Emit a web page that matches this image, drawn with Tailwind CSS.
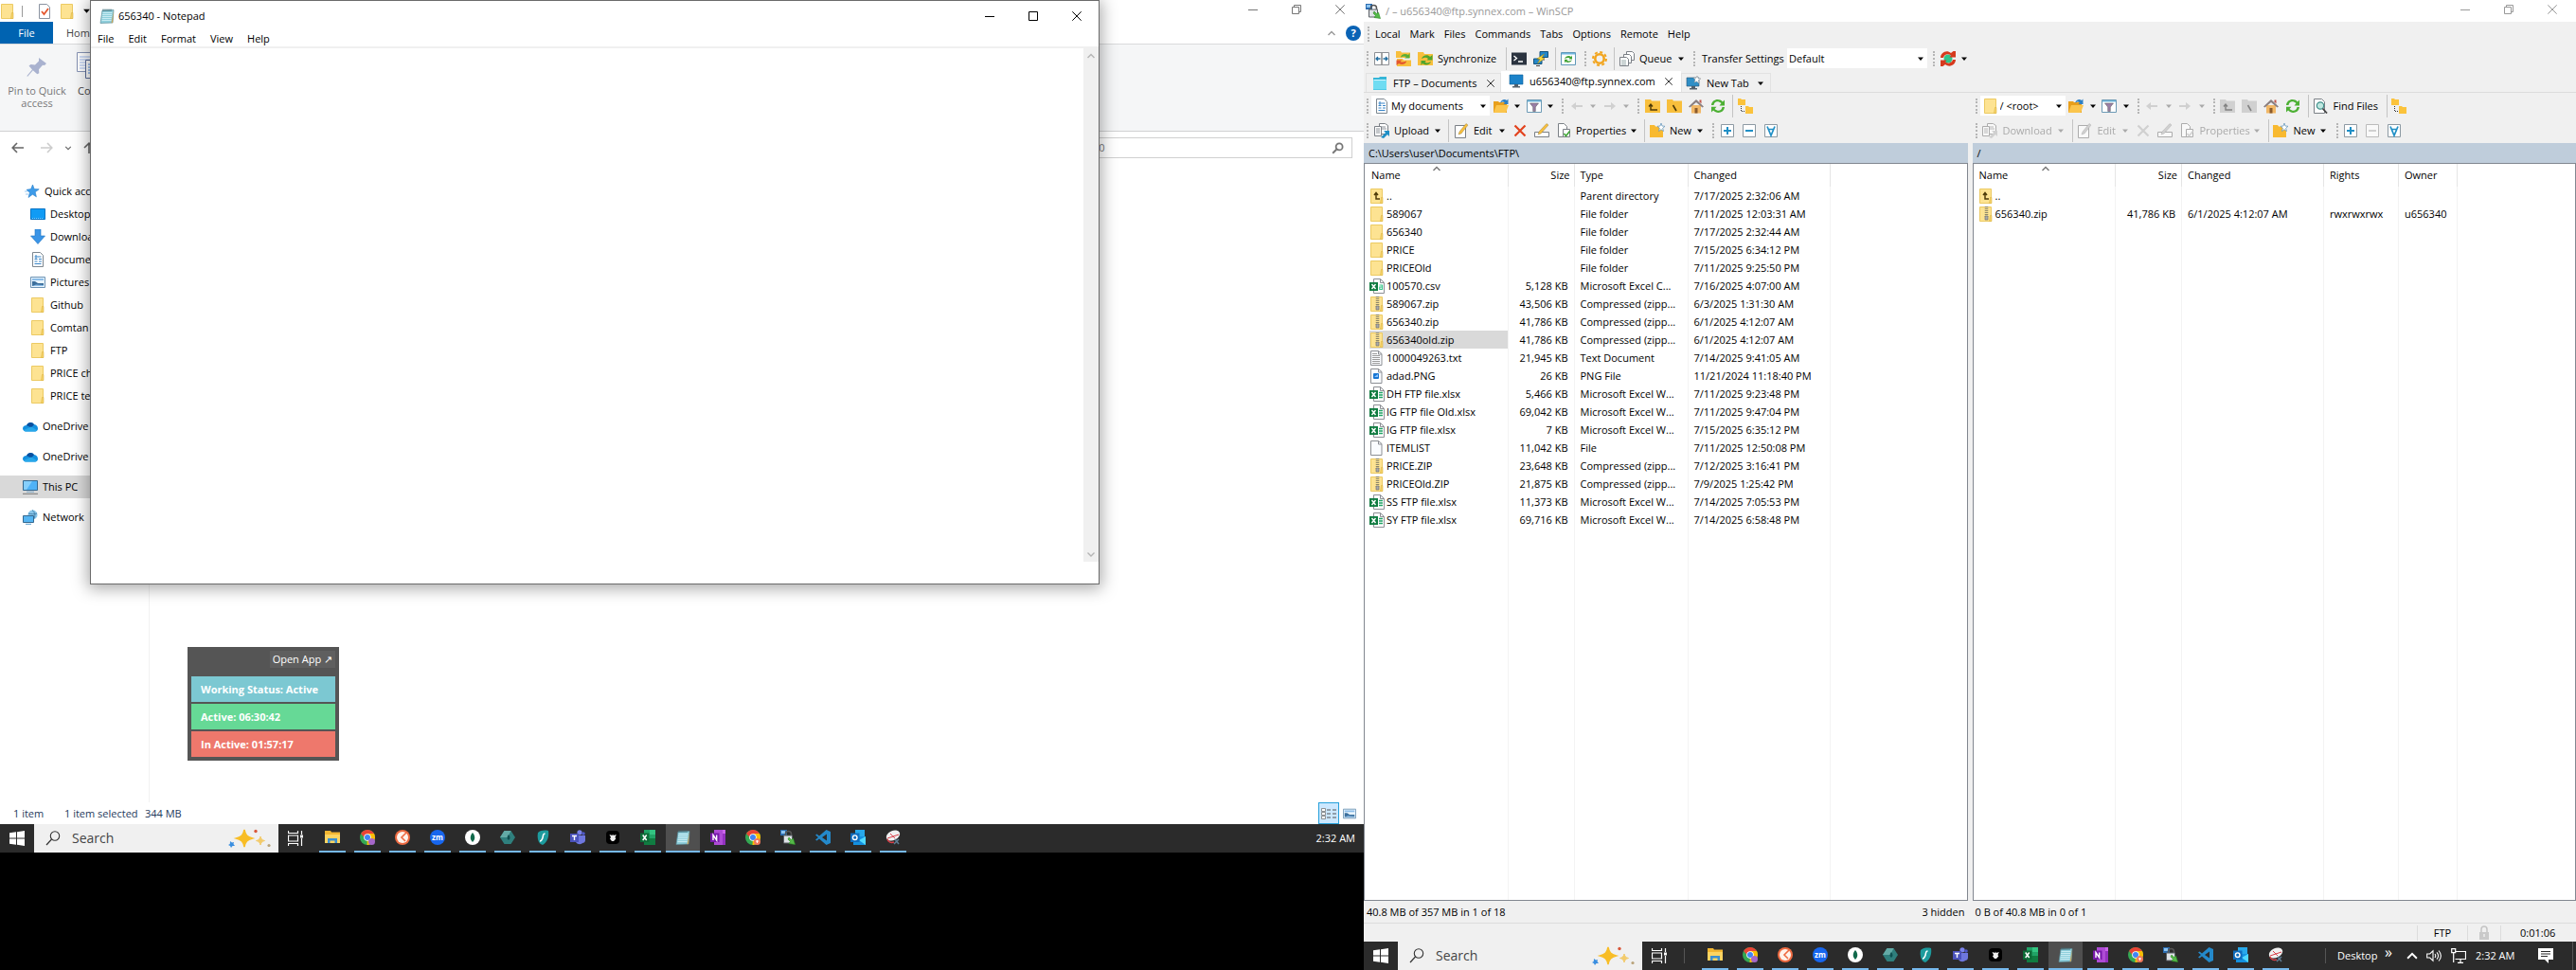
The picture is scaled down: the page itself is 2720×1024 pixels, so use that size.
<!DOCTYPE html>
<html lang="en">
<head>
    <meta charset="UTF-8">
    <meta name="viewport" content="width=device-width, initial-scale=1.0">
    <title>Desktop</title>
    <script src="https://cdn.jsdelivr.net/npm/@tailwindcss/browser@4"></script>
</head>
<body class="bg-black text-black text-[11px] leading-4 font-['Open_Sans','Noto_Sans',sans-serif]">

    <!-- Icon sprite -->
    <svg class="hidden" xmlns="http://www.w3.org/2000/svg">
        <symbol id="i-folder" viewBox="0 0 16 16"><path d="M1.500.5h12v15h-12z" fill="#fde392" stroke="#ecca62"/><path d="M11.500 15.500l1-6 1.500 0v6z" fill="#f7d56a" stroke="#dcb444" stroke-width=".6"/></symbol>
        <symbol id="i-folderup" viewBox="0 0 16 16"><use href="#i-folder"/><path d="M7 5v6h4M5 7l2-2.500 2 2.500" fill="none" stroke="#4d3a08" stroke-width="1.500"/></symbol>
        <symbol id="i-zip" viewBox="0 0 16 16"><use href="#i-folder"/><path d="M8.500 0v11" stroke="#8a8468" stroke-width="3.500" stroke-dasharray="1 1"/><path d="M7 10h3v4H7z" fill="#aaa" stroke="#666" stroke-width=".6"/></symbol>
        <symbol id="i-file" viewBox="0 0 16 16"><path d="M1.500.5h8l3.500 3v12h-11.500z" fill="#fafcff" stroke="#8c8f94"/><path d="M9.500.5v3.500h3.500" fill="none" stroke="#8c8f94"/></symbol>
        <symbol id="i-txt" viewBox="0 0 16 16"><use href="#i-file"/><path d="M3 3.500h5M3 5.500h8M3 7.500h8M3 9.500h8M3 11.500h8M3 13.500h8" stroke="#9b9b9b"/></symbol>
        <symbol id="i-png" viewBox="0 0 16 16"><use href="#i-file"/><rect x="4" y="5" width="6" height="6" rx="1" fill="#1976d2"/><path d="M5 9l4-3v3z" fill="#8cc5ff"/></symbol>
        <symbol id="i-xlsx" viewBox="0 0 16 16"><path d="M4.500.5h7l4 4v11h-11z" fill="#fff" stroke="#8c8f94"/><path d="M11.500.5v4h4" fill="none" stroke="#8c8f94"/><path d="M10 6.500h4M10 9h4M10 11.500h4" stroke="#21a366" stroke-width="1.400"/><path d="M0 4h9v9H0z" fill="#107c41"/><path d="M2.500 6l4 5M6.500 6l-4 5" stroke="#fff" stroke-width="1.400"/></symbol>
        <symbol id="i-csv" viewBox="0 0 16 16"><path d="M4.500.5h7l4 4v11h-11z" fill="#fff" stroke="#8c8f94"/><path d="M11.500.5v4h4" fill="none" stroke="#8c8f94"/><path d="M10.500 7H13.500v4.500H10.800V9h2.700" fill="none" stroke="#3bc58a" stroke-width="1.200"/><path d="M0 4h9v9H0z" fill="#107c41"/><path d="M2.500 6l4 5M6.500 6l-4 5" stroke="#fff" stroke-width="1.400"/></symbol>
        <symbol id="i-doc" viewBox="0 0 16 16"><path d="M2.500.5h8l3 3v12h-11z" fill="#fff" stroke="#7d8790"/><path d="M4.500 5h7M4.500 7.500h3M9 7.500h3M4.500 10h3M9 10h3M4.500 12.500h7" stroke="#3a86c8" stroke-width="1.200"/><path d="M6 3v4" stroke="#3a86c8"/></symbol>
        <symbol id="i-desktop" viewBox="0 0 16 16"><path d="M.5 2.500h15v11H.5z" fill="#109bf5" stroke="#0b74c4"/><path d="M2 12.500h12" stroke="#7cc9fb" stroke-dasharray="1 1"/></symbol>
        <symbol id="i-download" viewBox="0 0 16 16"><path d="M5 0h6v7h4.500L8 15.500.5 7H5z" fill="#3a94e6" stroke="#1d74c4" stroke-width=".6"/></symbol>
        <symbol id="i-pictures" viewBox="0 0 16 16"><path d="M.5 2.500h15v11H.5z" fill="#e8f4fd" stroke="#6d93b4"/><path d="M2 4h12v2H2z" fill="#8cbde8"/><path d="M2 12V7h3l3 2h6v3z" fill="#3c6f9c"/><path d="M2 12l4-1.500 8 .5v1z" fill="#8fc0ea"/></symbol>
        <symbol id="i-star" viewBox="0 0 16 16"><path d="M8.500 1l1.700 4.500 5 .3-4 3 1.200 5-4-2.600L4 14.500l1.400-5L2 6.300l4.600-.7z" fill="#3d9be9" stroke="#2a7fc9" stroke-width=".6"/><path d="M0 8h3M1 11h3" stroke="#9ccbf3"/></symbol>
        <symbol id="i-onedrive" viewBox="0 0 16 16"><path d="M4 7a4.500 4.500 0 018-1c2.500.5 4 2 4 4.500 0 2-1.500 3-3 3H3.500C1.500 13.500 0 12 0 10.500 0 8.500 1.500 7 4 7z" fill="#1490df"/><path d="M4 7a4.500 4.500 0 018-1L9 9.500z" fill="#0a4f9e"/><path d="M1 12l8-3.500 6 3.500c-.5 1-1.300 1.500-2 1.500H3.500C2.300 13.500 1.500 13 1 12z" fill="#28a8ea"/></symbol>
        <symbol id="i-pc" viewBox="0 0 16 16"><path d="M.5 1.500h15v10H.5z" fill="#4fb2f7" stroke="#35688f"/><path d="M1 2h9L4 11H1z" fill="#86cffc"/><path d="M4 13.200h8" stroke="#7aa5c4"/><path d="M0 15.300h16" stroke="#777"/></symbol>
        <symbol id="i-network" viewBox="0 0 16 16"><circle cx="10.500" cy="5.500" r="5" fill="#8ac6ea"/><path d="M10 .5c3 2 4 7 1 10M6 4c3 1 6 1 9 0" stroke="#4584ad" fill="none"/><path d="M.5 6.500h11v7H.5z" fill="#55b5f2" stroke="#35688f"/><path d="M3 15.300h6" stroke="#5c9fcd"/></symbol>
        <symbol id="i-notepad" viewBox="0 0 16 16"><path d="M3 2l12-.5-1 13.500-13 .5z" fill="#8fcfdc" stroke="#5d8f9b" stroke-width=".7"/><path d="M3.500 4.500h10M3 6.500h10M3 8.500h10M2.700 10.500h10M2.500 12.500h10" stroke="#d6f2f7" stroke-width=".8"/><path d="M4 .5v2.500M6 .5v2.500M8 .5v2.500M10 .5v2.500M12 .5v2.500" stroke="#44707a" stroke-width=".9"/><path d="M15 2l-1 13-1.500.3z" fill="#c8a45a"/></symbol>
        <symbol id="i-check" viewBox="0 0 16 16"><path d="M2.500.5h8l3 3v12h-11z" fill="#fff" stroke="#8a93a0"/><path d="M5 8l2.500 3L12 5" fill="none" stroke="#e4572e" stroke-width="1.800"/></symbol>
        <symbol id="i-pin" viewBox="0 0 24 24"><path d="M14 2l8 6-2 2-2-.3-4 4.500.3 4-2 1-4.500-4L2 22l-.5-1L7 14.500 3.500 10.500 5.500 9l4.500.6L14 5.500z" fill="#a9b2cf"/></symbol>
        <symbol id="i-copy" viewBox="0 0 28 32"><path d="M.5.5h17v20H.5z" fill="#fff" stroke="#8794b5"/><path d="M3 5h12M3 8h12M3 11h12M3 14h12M3 17h12" stroke="#9db8ec"/><path d="M9.500 8.500h17v19h-17z" fill="#fff" stroke="#5b6c99"/><path d="M12 13h12M12 16h12M12 19h12M12 22h12" stroke="#4d8ae0"/></symbol>
        <symbol id="i-winscp" viewBox="0 0 16 16"><path d="M0 0h7v6H0z" fill="#2b6cb0"/><path d="M1 1h4v3H1z" fill="#8cc3f0"/><path d="M5.500 6V4.500a3 3 0 016 0V6" fill="none" stroke="#555" stroke-width="1.500"/><path d="M3.500 6h9v8h-9z" fill="#dfe2e6" stroke="#5b6066"/><path d="M9 8l2.500 2.500L13.500 9l2 6.500-6.500-1 1.500-2L8 10z" fill="#54b948" stroke="#2d8a25" stroke-width=".6"/></symbol>
        <symbol id="i-compare" viewBox="0 0 16 16"><path d="M.5 1.500h15v13H.5z" fill="#fff" stroke="#8c8f94"/><path d="M8 2v12" stroke="#4a4a4a"/><path d="M2 8h4.500M9.500 8H14M4 6L2 8l2 2M12 6l2 2-2 2" fill="none" stroke="#1f6c9e" stroke-width="1.300"/></symbol>
        <symbol id="i-syncred" viewBox="0 0 16 16"><path d="M0 0h5l1 1.500h9V7H0zM1 8h6l1 1.500h8V16H1z" fill="#f8bf3c"/><path d="M5 6c1-3 5-4 8-2l1.500-2v5.500H9l2-1.500c-2-1-4-.5-6 .5z" fill="#5aae37"/><path d="M11 11c-1 3-5 4-8 2l-2.500 2V9.500h6l-2 1.500c2 1 4 .5 6.500-.5z" fill="#e4572e"/></symbol>
        <symbol id="i-sync" viewBox="0 0 16 16"><path d="M0 1h6l1 2h9v12H0z" fill="#f8bf3c"/><path d="M4 8c1-4 7-5 9-2l2.500-2v5.500H9.500L11 8c-2-2-4-1-7 0zM14 11c-1 3.500-6 4.500-9 2l-1.500 2v-5H9l-1.500 1.500c2 1.500 4 1 6.500-.5z" fill="#4fa52e"/></symbol>
        <symbol id="i-terminal" viewBox="0 0 16 16"><path d="M0 1.500h16v13H0z" fill="#2b3440"/><path d="M2.500 5l3 2.500-3 2.500M7 11h5" fill="none" stroke="#fff" stroke-width="1.300"/></symbol>
        <symbol id="i-putty" viewBox="0 0 16 16"><path d="M7 .5h8.500v6H7zM.5 8H9v5.500H.5z" fill="#2487c9" stroke="#15537d"/><path d="M11 7.500V10M3 15.500h4" stroke="#444"/><path d="M11.500 3L4 8l3 .6L4.500 13 12 7.500 9 7z" fill="#ffd93b" stroke="#a08411" stroke-width=".5"/></symbol>
        <symbol id="i-refreshbox" viewBox="0 0 16 16"><path d="M.5 1.500h15v13H.5z" fill="#fff" stroke="#5f98b8"/><path d="M1 2h14v1.500H1z" fill="#72b7df"/><path d="M4 8c1-3 5-4 7-2l1-1.500V8.500H8.500l1-1.200C8 6.500 6 7 4 8zM12 9c-1 3-5 4-7 2l-1 1.500V8.800h3.500L6.500 10c2 .8 3.500.5 5.500-1z" fill="#43a336"/></symbol>
        <symbol id="i-gear" viewBox="0 0 16 16"><circle cx="8" cy="8" r="4.700" fill="none" stroke="#f2a51f" stroke-width="2.600"/><circle cx="8" cy="8" r="7" fill="none" stroke="#f2a51f" stroke-width="2" stroke-dasharray="3 2.500"/></symbol>
        <symbol id="i-queue" viewBox="0 0 16 16"><g fill="#fff" stroke="#7b8086"><path d="M7.500.5h6l2 2v7h-8z"/><path d="M4.500 3.500h6l2 2v7h-8z"/><path d="M.5 6.500h7l2 2v7h-9z"/></g><path d="M2 10h5M2 12h5M2 14h5" stroke="#9aa"/></symbol>
        <symbol id="i-caret" viewBox="0 0 8 8"><path d="M1 2.500h6L4 6z" fill="currentColor"/></symbol>
        <symbol id="i-session" viewBox="0 0 16 16"><path d="M1 2h6l1-1h7v14H1z" fill="#35b6d8"/><path d="M1 5h14v9.500H1z" fill="#6fdcf2"/><path d="M1.500 4.500h13" stroke="#d2f7ff"/></symbol>
        <symbol id="i-monitor" viewBox="0 0 16 16"><path d="M1 1h14v10H1z" fill="#1b82c9" stroke="#0d5e99" stroke-width=".6"/><path d="M6 11h4v2H6zM4 13h8v1.500H4z" fill="#53606b"/></symbol>
        <symbol id="i-newtab" viewBox="0 0 16 16"><path d="M1 2h13v9H1z" fill="#2f8fc6" stroke="#2a5575" stroke-width=".6"/><path d="M6 11h4v2H6zM4 13h8v1.500H4z" fill="#53606b"/><path d="M12 0l1 2.500L16 3l-2.500 1.500L14 8l-2.500-2L9 7l1-3-2-2 3 .3z" fill="#fff" stroke="#888" stroke-width=".5"/></symbol>
        <symbol id="i-open" viewBox="0 0 16 16"><path d="M0 3h5l1 1h8v11H0z" fill="#e89f1c"/><path d="M3 7h13l-3 8H0z" fill="#fbc54d"/><path d="M7 5c1-4 5-5 7-3l1.500-1.500V6h-5L12 4.500C10.500 3 8.500 3.500 7 5z" fill="#2e80c4"/></symbol>
        <symbol id="i-filter" viewBox="0 0 16 16"><path d="M.5 1.500h15v13H.5z" fill="#fff" stroke="#6c9ab5"/><path d="M1 2h14v1.500H1z" fill="#6db3d8"/><path d="M3.500 5h9L9.300 9v4.500H6.700V9z" fill="#9a7fa6" stroke="#555" stroke-width=".5"/></symbol>
        <symbol id="i-back" viewBox="0 0 16 16"><path d="M14 7H7V4L2 8l5 4V9h7z" fill="currentColor"/></symbol>
        <symbol id="i-fwd" viewBox="0 0 16 16"><path d="M2 7h7V4l5 4-5 4V9H2z" fill="currentColor"/></symbol>
        <symbol id="i-parent" viewBox="0 0 16 16"><path d="M0 1h6l1 1.500h9V15H0z" fill="currentColor"/><path d="M6 6v6h7M4 8.500L6 6l2 2.500" fill="none" stroke="#4d3a08" stroke-width="1.400"/></symbol>
        <symbol id="i-root" viewBox="0 0 16 16"><path d="M0 1h6l1 1.500h9V15H0z" fill="currentColor"/><path d="M6.500 7l3.500 6" stroke="#4d3a08" stroke-width="1.600"/></symbol>
        <symbol id="i-home" viewBox="0 0 16 16"><path d="M3 7h10v8.500H3z" fill="#f2b867"/><path d="M6.500 10h3v5.500h-3z" fill="#8a5a2d"/><path d="M0 8.500L8 1l8 7.500-1.500 1L8 4 1.500 9.500z" fill="#8a7f80"/><path d="M11.500 1.500h2v4l-2-2z" fill="#c0554a"/></symbol>
        <symbol id="i-refresh" viewBox="0 0 16 16"><path d="M1 7c.5-6 8-8 12-3.500L15 1.500V7.500H9.500L11.500 5C8 2 4 3 3.500 7zM15 9c-.5 6-8 8-12 3.500L1 14.500V8.800h5.500L4.500 11C8 14 12 13 12.500 9z" fill="#4cb033"/></symbol>
        <symbol id="i-tree" viewBox="0 0 16 16"><path d="M0 0h3l1 1h4v6H0zM8 8h3l1 1h4v7H8z" fill="#fbc33c"/><path d="M3.500 8v5.500H8" fill="none" stroke="#333" stroke-dasharray="1 1"/></symbol>
        <symbol id="i-transfer" viewBox="0 0 16 16"><g fill="#fff" stroke="#7b8086"><path d="M5.500.5h6l3 2v9h-9z"/><path d="M.5 3.500h7v10h-7z"/></g><path d="M2 6h4M2 8h4M2 10h4M8 4h4M8 6h5" stroke="#8a9097"/><path d="M7 15l5-5-2-2h6v6l-2-2-4 4z" fill="currentColor"/></symbol>
        <symbol id="i-edit" viewBox="0 0 16 16"><path d="M1.500 2.500h11v13h-11z" fill="#fff" stroke="#7b8086"/><path d="M5 12l1-3 7-8.500 2 1.500-7 9z" fill="currentColor" stroke="#8a7440" stroke-width=".4"/></symbol>
        <symbol id="i-delete" viewBox="0 0 16 16"><path d="M2.500 2.500l11 11M13.500 2.500l-11 11" stroke="currentColor" stroke-width="2.200"/></symbol>
        <symbol id="i-rename" viewBox="0 0 16 16"><path d="M.5 9.500h15v5H.5z" fill="#fff" stroke="#7b8086"/><path d="M4 12l1-3 8-8.500 2 1.500-8 9z" fill="currentColor" stroke="#8a7440" stroke-width=".4"/></symbol>
        <symbol id="i-props" viewBox="0 0 16 16"><path d="M2.500.5h6l3 3v11h-9z" fill="#fff" stroke="#7b8086"/><path d="M7.500 6.500h7v8h-7z" fill="#fff" stroke="#7b8086"/><path d="M8.500 11l2 2.500 4-5" fill="none" stroke="currentColor" stroke-width="1.600"/></symbol>
        <symbol id="i-new" viewBox="0 0 16 16"><path d="M0 2h5l1 1.500h8V15H0z" fill="#f8b930"/><path d="M12 0l1 3 3 .3-2.300 2 .8 3.200L12 6.700 9.500 8.500l.8-3.200L8 3.300 11 3z" fill="#fff" stroke="#5a8fb8" stroke-width=".7"/></symbol>
        <symbol id="i-plus" viewBox="0 0 16 16"><path d="M1.500 1.500h13v13h-13z" fill="#fff" stroke="#8d9aa3"/><path d="M4 8h8M8 4v8" stroke="currentColor" stroke-width="2"/></symbol>
        <symbol id="i-minus" viewBox="0 0 16 16"><path d="M1.500 1.500h13v13h-13z" fill="#fff" stroke="#8d9aa3"/><path d="M4 8h8" stroke="currentColor" stroke-width="2"/></symbol>
        <symbol id="i-select" viewBox="0 0 16 16"><path d="M1.500 1.500h13v13h-13z" fill="#fff" stroke="#8d9aa3"/><path d="M4 3.500L8 13l4-9.500M5.500 6.500h5" fill="none" stroke="currentColor" stroke-width="1.700"/></symbol>
        <symbol id="i-find" viewBox="0 0 16 16"><path d="M1.500.5h8l3 3v12h-11z" fill="#fff" stroke="#7b8086"/><circle cx="8" cy="7.500" r="3.700" fill="#bfe8e0" stroke="#3f8f8a" stroke-width="1.200"/><path d="M10.500 10.500l4.500 5" stroke="#444" stroke-width="1.800"/></symbol>
        <symbol id="i-reconnect" viewBox="0 0 16 16"><circle cx="8" cy="8" r="4.500" fill="#2fc58c"/><path d="M0 7c0-5 6-9 11-5L13.500 0H16v6.500H9.500l1.500-2C7 2 4 4 3 7zM16 9c0 5-6 9-11 5l-2.500 2H0V9.500h6.500l-1.500 2c4 2.500 7 .5 8-2.500z" fill="#d63a1e"/></symbol>
        <symbol id="i-mag" viewBox="0 0 16 16"><circle cx="10" cy="5.500" r="4.700" fill="none" stroke="currentColor" stroke-width="1.100"/><path d="M6.500 9L1 15" stroke="currentColor" stroke-width="1.200"/></symbol>
        <symbol id="i-magbold" viewBox="0 0 16 16"><circle cx="10" cy="6" r="4.300" fill="none" stroke="currentColor" stroke-width="2.200"/><path d="M7 9L1.500 14.500" stroke="currentColor" stroke-width="2.400"/></symbol>
        <symbol id="i-min" viewBox="0 0 10 10"><path d="M0 5.500h10" stroke="currentColor"/></symbol>
        <symbol id="i-max" viewBox="0 0 10 10"><path d="M.5.5h9v9h-9z" fill="none" stroke="currentColor"/></symbol>
        <symbol id="i-restore" viewBox="0 0 10 10"><path d="M.5 2.500h7v7h-7zM2.500 2.500v-2h7v7h-2" fill="none" stroke="currentColor"/></symbol>
        <symbol id="i-close" viewBox="0 0 10 10"><path d="M.3.3l9.400 9.400M9.700.3L.3 9.700" stroke="currentColor"/></symbol>
        <symbol id="i-up" viewBox="0 0 10 10"><path d="M1.500 7L5 3.500 8.500 7" fill="none" stroke="currentColor" stroke-width="1.400"/></symbol>
        <symbol id="i-down" viewBox="0 0 10 10"><path d="M1.500 3.500L5 7l3.500-3.500" fill="none" stroke="currentColor" stroke-width="1.400"/></symbol>
        <symbol id="i-arrow-l" viewBox="0 0 14 12"><path d="M13 6H1.500M6 1L1.200 6 6 11" fill="none" stroke="currentColor" stroke-width="1.600"/></symbol>
        <symbol id="i-arrow-r" viewBox="0 0 14 12"><path d="M1 6h11.500M8 1l4.800 5L8 11" fill="none" stroke="currentColor" stroke-width="1.600"/></symbol>
        <symbol id="i-arrow-u" viewBox="0 0 12 12"><path d="M6 12V1.500M1 6l5-4.800L11 6" fill="none" stroke="currentColor" stroke-width="1.600"/></symbol>
        <!-- Taskbar -->
        <symbol id="t-start" viewBox="0 0 16 16"><path d="M0 2.300L7 1.300v6.200H0zM8 1.200L16 0v7.500H8zM0 8.500h7v6.200l-7-1zM8 8.500h8V16l-8-1.200z" fill="#fff"/></symbol>
        <symbol id="t-sparkle" viewBox="0 0 46 20"><path d="M18 1c1 5.500 3 7.500 8.500 9-5.500 1.500-7.500 3.500-8.500 9-1-5.500-3-7.500-8.500-9C15 8.500 17 6.500 18 1z" fill="#f8bd26" stroke="#f8bd26" stroke-width="1.500"/><path d="M35 8c.6 2.800 1.700 3.800 4.500 4.500-2.800.7-3.900 1.700-4.500 4.500-.6-2.800-1.700-3.800-4.500-4.500C33.300 11.800 34.400 10.800 35 8z" fill="#f3cb6a" stroke="#f3cb6a"/><path d="M3 13l2 1.500 2-.5-.5 2L8 18l-2.500 0L4 20l-1-2-2-1 1.800-1z" fill="#3a8ee0"/><circle cx="30" cy="2.500" r="1.700" fill="#d9583b"/><circle cx="44" cy="17.500" r="1.600" fill="#b9a37a"/></symbol>
        <symbol id="t-view" viewBox="0 0 16 16"><path d="M.5 0v2.500h10V0M.5 16v-2.500h10V16M.5 5h10v6H.5zM14.500 0v4M14.500 8v8" fill="none" stroke="#fff" stroke-width="1.200"/><path d="M13 4.500h3v3h-3z" fill="#fff"/></symbol>
        <symbol id="t-explorer" viewBox="0 0 16 16"><path d="M0 1h6l1 1.500h9V14H0z" fill="#f2b632"/><path d="M0 5h16v9H0z" fill="#fcd462"/><path d="M3 14V9h10v5h-2.500v-2.500h-5V14z" fill="#3b8fd0"/></symbol>
        <symbol id="t-chrome" viewBox="0 0 16 16"><circle cx="8" cy="8" r="8" fill="#34a853"/><path d="M8 8h8A8 8 0 017.500 16z" fill="#fbbc05"/><path d="M8 4h7a8 8 0 01.9 5L10 9z" fill="#fbbc05"/><path d="M1.100 4A8 8 0 0115 4H8L5 8.500z" fill="#ea4335"/><circle cx="8" cy="8" r="3.800" fill="#fff"/><circle cx="8" cy="8" r="3" fill="#4285f4"/></symbol>
        <symbol id="t-chrome1" viewBox="0 0 16 16"><use href="#t-chrome"/><circle cx="12.500" cy="12.500" r="3.500" fill="#a566c9"/></symbol>
        <symbol id="t-chrome2" viewBox="0 0 16 16"><use href="#t-chrome"/><circle cx="12.500" cy="12.500" r="3.500" fill="#f2795c"/><path d="M11 12h3M12.500 11v3" stroke="#fff"/></symbol>
        <symbol id="t-orange" viewBox="0 0 16 16"><circle cx="8" cy="8" r="8" fill="#ee6b42"/><circle cx="8" cy="8" r="6" fill="#fff3ec"/><path d="M12 3L7 8l4 4" fill="none" stroke="#ee6b42" stroke-width="1.600"/></symbol>
        <symbol id="t-zoom" viewBox="0 0 16 16"><circle cx="8" cy="8" r="8" fill="#1766ee"/><text x="8" y="10.500" text-anchor="middle" font-size="8" font-weight="700" fill="#fff">zm</text></symbol>
        <symbol id="t-mongo" viewBox="0 0 16 16"><circle cx="8" cy="8" r="8" fill="#fff"/><path d="M8 3c3 3.500 3 7 0 10-3-3-3-6.500 0-10z" fill="#11694b"/></symbol>
        <symbol id="t-hex" viewBox="0 0 16 16"><path d="M4.500 1h7L16 8l-4.500 7h-7L0 8z" fill="#2f7f7d"/><path d="M4.500 1h7L8 8H0z" fill="#63aaa6"/><path d="M9 5c2 2.500 2 4.500 0 6-2-1.500-2-3.500 0-6z" fill="#0f4f50"/></symbol>
        <symbol id="t-surf" viewBox="0 0 16 16"><path d="M3 3c3-2.500 7-3 11-2 1 6-1 12-6 15C3 15 2 8 3 3z" fill="#1d9b9d"/><path d="M10.500 4C8 4 8.500 7 8 8.500S7 12 5 12" fill="none" stroke="#fff" stroke-width="1.500"/></symbol>
        <symbol id="t-teams" viewBox="0 0 16 16"><circle cx="10" cy="2.800" r="2.600" fill="#7b83eb"/><circle cx="14" cy="4" r="1.800" fill="#5059c9"/><path d="M6 6h10v5c0 2-1.500 3-3 3-1 1.500-5 2-7-1z" fill="#6e77de"/><path d="M0 4h9v9H0z" fill="#4b53bc"/><path d="M2 6.500h5M4.500 6.500V11" stroke="#fff" stroke-width="1.400"/></symbol>
        <symbol id="t-black" viewBox="0 0 16 16"><rect x="1" y="1" width="14" height="14" rx="4" fill="#000"/><path d="M4.500 5l3 1L8 4.500l.8 1.500 3-1-1.300 3 .8 1.500-2.300 2.500H7L5 9.500 6 8z" fill="#eee"/></symbol>
        <symbol id="t-excel" viewBox="0 0 16 16"><path d="M4 0h12v16H4z" fill="#21a366"/><path d="M10 0h6v5h-6z" fill="#33c481"/><path d="M4 9h12v7H4z" fill="#107c41"/><path d="M0 3.500h9.500v9.500H0z" fill="#0d6b37"/><path d="M2.700 5.500l4 5.500M6.700 5.500l-4 5.500" stroke="#fff" stroke-width="1.500"/></symbol>
        <symbol id="t-onenote" viewBox="0 0 16 16"><path d="M4 0h12v16H4z" fill="#ca64ea"/><path d="M13 4h3v12h-3z" fill="#9332bf"/><path d="M4 0h9v16H4z" fill="#ae4bd5"/><path d="M0 3.500h9.500v9.500H0z" fill="#7719aa"/><path d="M3 11V5.500L6.700 11V5.500" fill="none" stroke="#fff" stroke-width="1.400"/></symbol>
        <symbol id="t-vscode" viewBox="0 0 16 16"><path d="M11.500 0L16 2v12l-4.500 2L4 9.500 1.500 11.500 0 10.500 3 8 0 5.500l1.500-1L4 6.500zM12 4.500L7 8l5 3.500z" fill="#2489ca"/></symbol>
        <symbol id="t-outlook" viewBox="0 0 16 16"><path d="M5 0h10v8H5z" fill="#28a8ea"/><path d="M3 7h13v9H3z" fill="#1490df"/><path d="M9 11l7-4v9z" fill="#50d9ff"/><path d="M0 3.500h9.500v9.500H0z" fill="#0f6cbd"/><circle cx="4.700" cy="8.200" r="2.300" fill="none" stroke="#fff" stroke-width="1.400"/></symbol>
        <symbol id="t-snip" viewBox="0 0 16 16"><ellipse cx="8" cy="6" rx="7.500" ry="5" transform="rotate(-25 8 6)" fill="#f1f1f1"/><path d="M2 9l12-4M5 4l5 5" stroke="#d9404a"/><path d="M2 10c1 3 4 4 7 3" stroke="#d9404a" fill="none" stroke-width="1.600"/><path d="M10 10l4 5M14 10l-5 5" stroke="#5f7d94" stroke-width="1.500"/></symbol>
        <symbol id="t-sound" viewBox="0 0 16 16"><path d="M.7 6h3L7 2.800v10.400L3.700 10h-3zM9 6c1 1.300 1 2.700 0 4M11 4.300c2 2.300 2 5 0 7.400M13 2.500c3 3.500 3 7.500 0 11" fill="none" stroke="#fff" stroke-width="1.100"/></symbol>
        <symbol id="t-net" viewBox="0 0 16 16"><path d="M4.500 3.500h11v8h-11M10 12v3M7 15.300h6" fill="none" stroke="#fff" stroke-width="1.200"/><path d="M.7.7h4v4h-4zM2.700 5v10" fill="none" stroke="#fff" stroke-width="1.200"/></symbol>
        <symbol id="t-action" viewBox="0 0 16 16"><path d="M0 0h16v12h-5v4l-4-4H0z" fill="#fff"/><path d="M3 3.500h10M3 6h10M3 8.500h7" stroke="#2b2b2b" stroke-width="1.200"/></symbol>
    </svg>

    <div class="grid grid-cols-[9fr_8fr] min-h-screen">

        <!-- Left monitor -->
        <section class="relative flex flex-col pb-[124px] min-w-0">
            <div class="flex flex-col flex-1 bg-white">
                <header class="flex h-[23px] justify-between text-[#777]">
                    <div class="flex items-center">
                        <svg class="size-4"><use href="#i-folder"/></svg>
                        <span class="w-px h-3 bg-[#999] mx-[7px]"></span>
                        <svg class="size-4 mx-2"><use href="#i-check"/></svg>
                        <svg class="size-4"><use href="#i-folder"/></svg>
                        <svg class="size-[9px] mx-2 text-black"><use href="#i-caret"/></svg>
                    </div>
                    <div class="flex items-center pb-[3px] pr-[2px]">
                        <button aria-label="Minimize" class="w-[46px] grid place-items-center"><svg class="size-[10px]"><use href="#i-min"/></svg></button>
                        <button aria-label="Restore" class="w-[46px] grid place-items-center"><svg class="size-[10px]"><use href="#i-restore"/></svg></button>
                        <button aria-label="Close" class="w-[46px] grid place-items-center"><svg class="size-[10px]"><use href="#i-close"/></svg></button>
                    </div>
                </header>
                <div class="flex h-6 items-stretch border-b border-[#d9dadb]">
                    <button class="w-14 bg-[#0063b1] text-white">File</button>
                    <button class="px-[14px] text-[#444]">Home</button>
                    <div class="ml-auto flex items-center gap-[10px] pr-[3px]">
                        <svg class="size-[10px] text-[#999]"><use href="#i-up"/></svg>
                        <button aria-label="Help" class="size-4 rounded-full bg-[#0a63b5] text-white font-bold leading-4">?</button>
                    </div>
                </div>
                <div class="flex h-[92px] bg-[#f5f6f7] border-b border-[#d0d1d2] pt-2 text-[#777]">
                    <button class="w-[78px] flex flex-col items-center justify-start leading-[13px]"><svg class="size-6 mt-1 mb-[6px]"><use href="#i-pin"/></svg>Pin to Quick<br>access</button>
                    <button class="w-[34px] flex flex-col items-center justify-start leading-[13px] text-[#444]"><svg class="w-7 h-8 mb-[2px]"><use href="#i-copy"/></svg>Copy</button>
                </div>
                <div class="flex h-[34px] items-center justify-between">
                    <div class="flex items-center pl-3 text-[#666]">
                        <svg class="w-[14px] h-3"><use href="#i-arrow-l"/></svg>
                        <svg class="w-[14px] h-3 ml-4 text-[#ccc]"><use href="#i-arrow-r"/></svg>
                        <svg class="size-2 ml-3"><use href="#i-down"/></svg>
                        <svg class="size-3 ml-3"><use href="#i-arrow-u"/></svg>
                    </div>
                    <label class="flex items-center w-[342px] h-[22px] mr-3 border border-[#d0d0d0] px-1 text-[#777]">
                        <input type="text" value="Search 656340" aria-label="Search 656340" class="flex-1 outline-none">
                        <svg class="size-[13px] mr-1"><use href="#i-magbold"/></svg>
                    </label>
                </div>
                <nav class="flex-1 w-[158px] border-r border-[#f2f2f2] pt-[17px]">
                    <ul id="nav"></ul>
                </nav>
                <footer class="flex h-[23px] items-center text-[#1e395b]">
                    <span class="ml-[14px] w-[54px]">1 item</span>
                    <span class="w-[85px]">1 item selected</span>
                    <span>344 MB</span>
                    <div class="ml-auto flex h-full items-center gap-1 pr-2">
                        <button aria-label="Details view" class="w-[22px] h-full bg-[#cce8ff] border border-[#26a0da] grid place-items-center"><svg class="w-4 h-3" viewBox="0 0 16 12"><path d="M.5.5h4v3h-4zM.5 4.500h4v3h-4zM.5 8.500h4v3h-4z" fill="#fff" stroke="#777" stroke-width=".8"/><path d="M6 2h4M12 2h4M6 6h4M12 6h4M6 10h4M12 10h4" stroke="#555"/></svg></button>
                        <button aria-label="Large icons"><svg class="size-[14px]"><use href="#i-pictures"/></svg></button>
                    </div>
                </footer>
            </div>
            <div class="flex h-[30px] bg-[#2b2b2b] text-white items-center">
                <div class="taskbar flex h-full"></div>
                <time class="ml-auto mr-[9px]">2:32 AM</time>
            </div>

            <!-- Notepad window -->
            <div class="absolute top-0 left-[95px] right-[279px] h-[617px] flex flex-col bg-white border border-[#6b6b6b] shadow-[0_2px_16px_2px_rgba(0,0,0,0.35)]">
                <header class="flex h-[31px] items-center pl-[9px]">
                    <svg class="size-4"><use href="#i-notepad"/></svg>
                    <h1 class="ml-1">656340 - Notepad</h1>
                    <div class="ml-auto flex">
                        <button aria-label="Minimize" class="w-[46px] grid place-items-center"><svg class="size-[10px]"><use href="#i-min"/></svg></button>
                        <button aria-label="Maximize" class="w-[46px] grid place-items-center"><svg class="size-[10px]"><use href="#i-max"/></svg></button>
                        <button aria-label="Close" class="w-[46px] grid place-items-center"><svg class="size-[10px]"><use href="#i-close"/></svg></button>
                    </div>
                </header>
                <nav class="flex h-[19px] items-center gap-[15px] pl-[7px] border-b-2 border-[#f0f0f0]">
                    <button>File</button>
                    <button>Edit</button>
                    <button>Format</button>
                    <button>View</button>
                    <button>Help</button>
                </nav>
                <div class="flex flex-1 mb-[23px]">
                    <textarea aria-label="Document text" class="flex-1 resize-none outline-none"></textarea>
                    <div class="w-4 bg-[#f0f0f0] flex flex-col items-center justify-between py-[3px] text-[#b5b5b5]">
                        <svg class="size-[10px]"><use href="#i-up"/></svg>
                        <svg class="size-[10px]"><use href="#i-down"/></svg>
                    </div>
                </div>
            </div>

            <!-- Time tracker widget -->
            <div class="absolute left-[198px] top-[683px] w-40 h-[120px] bg-[#555] p-1 text-white flex flex-col gap-[2px] font-bold">
                <button class="self-end h-[18px] mb-[7px] px-[3px] bg-[#5f5f5f] font-normal">Open App ↗</button>
                <div class="h-[27px] pl-[10px] flex items-center bg-[#7cc8d2]">Working Status: Active</div>
                <div class="h-[27px] pl-[10px] flex items-center bg-[#66d996]">Active: 06:30:42</div>
                <div class="h-[27px] pl-[10px] flex items-center bg-[#ee786c]">In Active: 01:57:17</div>
            </div>
        </section>

        <!-- Right monitor: WinSCP -->
        <section class="flex flex-col min-w-0 bg-[#f0f0f0]">
            <header class="flex h-[23px] items-center bg-white pl-[2px] text-[#999]">
                <svg class="size-4"><use href="#i-winscp"/></svg>
                <h1 class="ml-[5px]">/ – u656340@ftp.synnex.com – WinSCP</h1>
                <div class="ml-auto flex items-center pb-[3px] pr-[2px]">
                    <button aria-label="Minimize" class="w-[46px] grid place-items-center"><svg class="size-[10px]"><use href="#i-min"/></svg></button>
                    <button aria-label="Restore" class="w-[46px] grid place-items-center"><svg class="size-[10px]"><use href="#i-restore"/></svg></button>
                    <button aria-label="Close" class="w-[46px] grid place-items-center"><svg class="size-[10px]"><use href="#i-close"/></svg></button>
                </div>
            </header>
            <nav class="flex h-[25px] items-center">
                <span class="ml-1 h-4 border-l-2 border-dotted border-[#b5b5b5]"></span>
                <div class="flex gap-[10px] ml-[6px]">
                    <button>Local</button>
                    <button>Mark</button>
                    <button>Files</button>
                    <button>Commands</button>
                    <button>Tabs</button>
                    <button>Options</button>
                    <button>Remote</button>
                    <button>Help</button>
                </div>
            </nav>
            <div id="toolbar-main" class="flex h-[27px] items-center"></div>
            <div class="flex h-[23px] items-stretch border-b border-[#dcdcdc] pl-[2px]">
                <button class="flex items-center w-[143px] pl-[6px] mt-[2px] border border-b-0 border-[#e2e2e2]"><svg class="size-4 mr-[6px]"><use href="#i-session"/></svg>FTP – Documents<svg class="size-2 ml-auto mr-[6px]"><use href="#i-close"/></svg></button>
                <button class="flex items-center w-[190px] pl-2 bg-white"><svg class="size-4 mr-[6px]"><use href="#i-monitor"/></svg>u656340@ftp.synnex.com<svg class="size-2 ml-auto mr-[9px]"><use href="#i-close"/></svg></button>
                <button class="flex items-center w-[95px] pl-1 mt-[2px] border border-b-0 border-[#e2e2e2]"><svg class="size-4 mr-[6px]"><use href="#i-newtab"/></svg>New Tab<svg class="size-2 ml-auto mr-[6px]"><use href="#i-caret"/></svg></button>
            </div>
            <div class="flex-1 grid grid-cols-2 gap-[5px]">
                <div class="flex flex-col min-w-0">
                    <div id="local-nav" class="flex h-[27px] items-center"></div>
                    <div id="local-actions" class="flex h-[26px] items-center"></div>
                    <div class="h-[21px] leading-[21px] bg-[#bfcddb] pl-[5px]">C:\Users\user\Documents\FTP\</div>
                    <div class="flex-1 bg-white border border-[#828790]">
                        <table class="w-full h-full table-fixed">
                            <colgroup><col class="w-[151px]"><col class="w-[70px]"><col class="w-[120px]"><col class="w-[150px]"><col></colgroup>
                            <thead>
                                <tr class="h-6 text-left">
                                    <th class="relative font-normal pl-[7px] border-r border-[#e5e5e5]">Name<svg class="absolute size-[10px] left-[71px] top-0 text-[#777]"><use href="#i-up"/></svg></th>
                                    <th class="font-normal pr-1 text-right border-r border-[#e5e5e5]">Size</th>
                                    <th class="font-normal pl-[6px] border-r border-[#e5e5e5]">Type</th>
                                    <th class="font-normal pl-[6px] border-r border-[#e5e5e5]">Changed</th>
                                    <th></th>
                                </tr>
                            </thead>
                            <tbody id="local-files"></tbody>
                        </table>
                    </div>
                    <div class="h-[23px] leading-[23px] flex justify-between px-[3px]"><span>40.8 MB of 357 MB in 1 of 18</span><span>3 hidden</span></div>
                </div>
                <div class="flex flex-col min-w-0">
                    <div id="remote-nav" class="flex h-[27px] items-center"></div>
                    <div id="remote-actions" class="flex h-[26px] items-center"></div>
                    <div class="h-[21px] leading-[21px] bg-[#bfcddb] pl-[5px]">/</div>
                    <div class="flex-1 bg-white border border-[#828790]">
                        <table class="w-full h-full table-fixed">
                            <colgroup><col class="w-[150px]"><col class="w-[70px]"><col class="w-[150px]"><col class="w-[79px]"><col class="w-[62px]"><col></colgroup>
                            <thead>
                                <tr class="h-6 text-left">
                                    <th class="relative font-normal pl-[6px] border-r border-[#e5e5e5]">Name<svg class="absolute size-[10px] left-[71px] top-0 text-[#777]"><use href="#i-up"/></svg></th>
                                    <th class="font-normal pr-1 text-right border-r border-[#e5e5e5]">Size</th>
                                    <th class="font-normal pl-[6px] border-r border-[#e5e5e5]">Changed</th>
                                    <th class="font-normal pl-[6px] border-r border-[#e5e5e5]">Rights</th>
                                    <th class="font-normal pl-[6px] border-r border-[#e5e5e5]">Owner</th>
                                    <th></th>
                                </tr>
                            </thead>
                            <tbody id="remote-files"></tbody>
                        </table>
                    </div>
                    <div class="h-[23px] leading-[23px] px-[3px]">0 B of 40.8 MB in 0 of 1</div>
                </div>
            </div>
            <footer class="flex h-5 justify-end items-center border-t border-[#dcdcdc]">
                <span class="w-[53px] border-l border-[#dcdcdc] text-center">FTP</span>
                <span class="w-[35px] border-l border-[#dcdcdc] grid place-items-center"><svg class="w-3 h-4" viewBox="0 0 12 16"><path d="M3 7V4a3 3 0 016 0v3" fill="none" stroke="#c4c4c4" stroke-width="1.500"/><path d="M1 7h10v8H1z" fill="#c9c9c9"/><path d="M6 9v3" stroke="#eee" stroke-width="1.500"/></svg></span>
                <span class="w-20 border-l border-[#dcdcdc] pl-5">0:01:06</span>
            </footer>
            <div class="flex h-[30px] bg-[#2b2b2b] text-white items-center">
                <div class="taskbar flex h-full" data-grip="1"></div>
                <div class="ml-auto flex items-center pr-[3px]">
                    <span class="w-px h-4 bg-[#555] mr-3"></span>
                    <span class="w-[50px]">Desktop</span>
                    <span class="w-[14px] text-base leading-4 pb-2">»</span>
                    <svg class="size-[14px] mx-2"><use href="#i-up"/></svg>
                    <svg class="size-4"><use href="#t-sound"/></svg>
                    <svg class="size-4 mx-[10px]"><use href="#t-net"/></svg>
                    <time class="w-[66px]">2:32 AM</time>
                    <svg class="size-4 mr-5"><use href="#t-action"/></svg>
                    <span class="w-px h-[30px] bg-[#555]"></span>
                </div>
            </div>
        </section>
    </div>

    <script>
        const icon = (id, cls = 'size-4') => `<svg class="${cls} shrink-0"><use href="#${id}"/></svg>`;

        // --- Explorer navigation pane ---
        const navItems = [
            ['i-star', 'Quick access', 'pl-[26px]'],
            ['i-desktop', 'Desktop', 'pl-8'],
            ['i-download', 'Downloads', 'pl-8'],
            ['i-doc', 'Documents', 'pl-8'],
            ['i-pictures', 'Pictures', 'pl-8'],
            ['i-folder', 'Github', 'pl-8'],
            ['i-folder', 'Comtan', 'pl-8'],
            ['i-folder', 'FTP', 'pl-8'],
            ['i-folder', 'PRICE ch', 'pl-8'],
            ['i-folder', 'PRICE te', 'pl-8'],
            ['i-onedrive', 'OneDrive', 'pl-6 mt-2'],
            ['i-onedrive', 'OneDrive', 'pl-6 mt-2'],
            ['i-pc', 'This PC', 'pl-6 mt-2 bg-[#d9d9d9]'],
            ['i-network', 'Network', 'pl-6 mt-2'],
        ];
        document.getElementById('nav').innerHTML = navItems.map(([id, text, cls]) =>
            `<li class="${cls}"><a href="#" class="flex h-6 items-center gap-[5px] whitespace-nowrap">${icon(id)}${text}</a></li>`).join('');

        // --- Toolbars ---
        const grip = () => `<span class="ml-[6px] first:ml-[3px] w-[3px] mr-px h-4 border-l-2 border-dotted border-[#b5b5b5] shrink-0"></span>`;
        const sep = () => `<span class="ml-1 w-px mr-px h-6 bg-[#c4c4c4] shrink-0"></span>`;
        function button(id, { label = '', width = '', caret = false, color = '', off = false } = {}) {
            const tone = off ? 'text-[#aaa] grayscale' : '';
            const glyph = off ? 'size-4 text-[#bbb] opacity-60' : `size-4 ${color}`;
            return `<button class="flex items-center shrink-0 h-6 ${tone}" ${off ? 'disabled' : ''} aria-label="${label || id.slice(2)}">
                <span class="w-[23px] grid place-items-center">${icon(id, glyph)}</span>
                ${label ? `<span class="${width} pl-[2px] text-left whitespace-nowrap">${label}</span>` : ''}
                ${caret ? `<span class="${label ? 'w-[15px]' : 'w-3'} grid place-items-center">${icon('i-caret', 'size-2')}</span>` : ''}
            </button>`;
        }
        const select = (id, text, width) => `<label class="flex items-center h-[21px] bg-white shrink-0 ml-px pr-[3px] ${width}">
            ${id ? icon(id, 'size-4 ml-[3px]') : ''}
            <select aria-label="${text}" class="flex-1 min-w-0 appearance-none outline-none pl-[2px]"><option>${text}</option></select>${icon('i-caret', 'size-2')}</label>`;

        const gold = 'text-[#f8bf3c]', blue = 'text-[#1f8fc6]', green = 'text-[#3fa535]', red = 'text-[#e2431e]';

        document.getElementById('toolbar-main').innerHTML = [
            grip(), button('i-compare'), button('i-syncred'), button('i-sync', { label: 'Synchronize', width: 'w-[70px]' }),
            sep(), button('i-terminal'), button('i-putty'), sep(), button('i-refreshbox'),
            grip(), button('i-gear'), sep(), button('i-queue', { label: 'Queue', width: 'w-[38px]', caret: true }),
            grip(), '<span class="w-[94px] pl-[5px] whitespace-nowrap">Transfer Settings</span>', select('', 'Default', 'w-[148px]'),
            grip(), button('i-reconnect', { caret: true }),
        ].join('');

        const navTools = (remote) => [
            button('i-open', { caret: true }), button('i-filter', { caret: true }),
            grip(), button('i-back', { caret: true, off: true }), button('i-fwd', { caret: true, off: true }),
            grip(), button('i-parent', { color: gold, off: remote }), button('i-root', { color: gold, off: remote }),
            button('i-home'), button('i-refresh'), sep(),
        ].join('');
        document.getElementById('local-nav').innerHTML =
            grip() + select('i-doc', 'My documents', 'w-[125px]') + navTools(false) + button('i-tree');
        document.getElementById('remote-nav').innerHTML =
            grip() + select('i-folder', '/ &lt;root&gt;', 'w-[90px]') + navTools(true) +
            button('i-find', { label: 'Find Files', width: 'w-[54px]' }) + sep() + button('i-tree');

        const actionTools = (first, width, off) => [
            grip(), button('i-transfer', { label: first, width, caret: true, color: blue, off }),
            sep(), button('i-edit', { label: 'Edit', width: 'w-[24px]', caret: true, color: gold, off }),
            button('i-delete', { color: red, off }), button('i-rename', { color: gold, off }),
            button('i-props', { label: 'Properties', width: 'w-[55px]', caret: true, color: green, off }),
            sep(), button('i-new', { label: 'New', width: 'w-[26px]', caret: true }),
            grip(), button('i-plus', { color: blue }), button('i-minus', { color: blue, off }), button('i-select', { color: blue }),
        ].join('');
        document.getElementById('local-actions').innerHTML = actionTools('Upload', 'w-[40px]', false);
        document.getElementById('remote-actions').innerHTML = actionTools('Download', 'w-[56px]', true);

        // --- File lists ---
        const localFiles = [
            ['i-folderup', '..', '', 'Parent directory', '7/17/2025 2:32:06 AM'],
            ['i-folder', '589067', '', 'File folder', '7/11/2025 12:03:31 AM'],
            ['i-folder', '656340', '', 'File folder', '7/17/2025 2:32:44 AM'],
            ['i-folder', 'PRICE', '', 'File folder', '7/15/2025 6:34:12 PM'],
            ['i-folder', 'PRICEOld', '', 'File folder', '7/11/2025 9:25:50 PM'],
            ['i-csv', '100570.csv', '5,128 KB', 'Microsoft Excel C...', '7/16/2025 4:07:00 AM'],
            ['i-zip', '589067.zip', '43,506 KB', 'Compressed (zipp...', '6/3/2025 1:31:30 AM'],
            ['i-zip', '656340.zip', '41,786 KB', 'Compressed (zipp...', '6/1/2025 4:12:07 AM'],
            ['i-zip', '656340old.zip', '41,786 KB', 'Compressed (zipp...', '6/1/2025 4:12:07 AM'],
            ['i-txt', '1000049263.txt', '21,945 KB', 'Text Document', '7/14/2025 9:41:05 AM'],
            ['i-png', 'adad.PNG', '26 KB', 'PNG File', '11/21/2024 11:18:40 PM'],
            ['i-xlsx', 'DH FTP file.xlsx', '5,466 KB', 'Microsoft Excel W...', '7/11/2025 9:23:48 PM'],
            ['i-xlsx', 'IG FTP file Old.xlsx', '69,042 KB', 'Microsoft Excel W...', '7/11/2025 9:47:04 PM'],
            ['i-xlsx', 'IG FTP file.xlsx', '7 KB', 'Microsoft Excel W...', '7/15/2025 6:35:12 PM'],
            ['i-file', 'ITEMLIST', '11,042 KB', 'File', '7/11/2025 12:50:08 PM'],
            ['i-zip', 'PRICE.ZIP', '23,648 KB', 'Compressed (zipp...', '7/12/2025 3:16:41 PM'],
            ['i-zip', 'PRICEOld.ZIP', '21,875 KB', 'Compressed (zipp...', '7/9/2025 1:25:42 PM'],
            ['i-xlsx', 'SS FTP file.xlsx', '11,373 KB', 'Microsoft Excel W...', '7/14/2025 7:05:53 PM'],
            ['i-xlsx', 'SY FTP file.xlsx', '69,716 KB', 'Microsoft Excel W...', '7/14/2025 6:58:48 PM'],
        ];
        const remoteFiles = [
            ['i-folderup', '..', '', '', '', ''],
            ['i-zip', '656340.zip', '41,786 KB', '6/1/2025 4:12:07 AM', 'rwxrwxrwx', 'u656340'],
        ];
        function fileRows(files, selected) {
            const rows = files.map(([id, name, size, ...rest]) => `<tr class="h-[19px] whitespace-nowrap">
                <td class="pl-[5px] border-r border-[#f3f3f3]"><div class="flex h-[19px] items-center gap-[2px] ${name === selected ? 'bg-[#d9d9d9]' : ''}">${icon(id)}${name}</div></td>
                <td class="pr-[6px] text-right border-r border-[#f3f3f3]">${size}</td>
                ${rest.map(t => `<td class="pl-[6px] border-r border-[#f3f3f3]">${t}</td>`).join('')}<td></td></tr>`);
            // last row stretches so the column lines reach the bottom
            const blank = files[0].slice(1).map(() => '<td class="border-r border-[#f3f3f3]"></td>').join('');
            return rows.join('') + `<tr class="h-full">${blank}<td></td></tr>`;
        }
        document.getElementById('local-files').innerHTML = fileRows(localFiles, '656340old.zip');
        document.getElementById('remote-files').innerHTML = fileRows(remoteFiles);

        // --- Taskbars ---
        const apps = ['t-explorer', 't-chrome1', 't-orange', 't-zoom', 't-mongo', 't-hex', 't-surf', 't-teams', 't-black',
            't-excel', 'i-notepad', 't-onenote', 't-chrome2', 'i-winscp', 't-vscode', 't-outlook', 't-snip'];
        document.querySelectorAll('.taskbar').forEach(bar => {
            bar.innerHTML = `<button aria-label="Start" class="w-9 grid place-items-center">${icon('t-start')}</button>
                <label class="flex w-[258px] items-center bg-[#f0f0f0] text-[#333] pl-3 pr-2">${icon('i-mag')}
                    <input type="text" placeholder="Search" aria-label="Search" class="flex-1 min-w-0 ml-3 text-sm outline-none placeholder:text-[#444]">
                    ${icon('t-sparkle', 'w-[46px] h-5')}</label>
                <button aria-label="Task view" class="w-9 grid place-items-center">${icon('t-view')}</button>
                ${bar.dataset.grip ? '<span class="w-px h-4 self-center bg-[#555] ml-2 mr-[13px]"></span>' : '<span class="w-[2px]"></span>'}` +
                apps.map(id => `<button aria-label="${id.slice(2)}" class="w-[37px] flex flex-col items-center">
                    <span class="flex-1 grid place-items-center ${id === 'i-notepad' ? 'w-9 bg-[#4f4f4f]' : ''}">${icon(id)}</span>
                    <span class="h-[2px] bg-[#76b9ed] ${id === 'i-notepad' ? 'w-9' : 'w-7'}"></span></button>`).join('');
        });
    </script>
</body>
</html>
